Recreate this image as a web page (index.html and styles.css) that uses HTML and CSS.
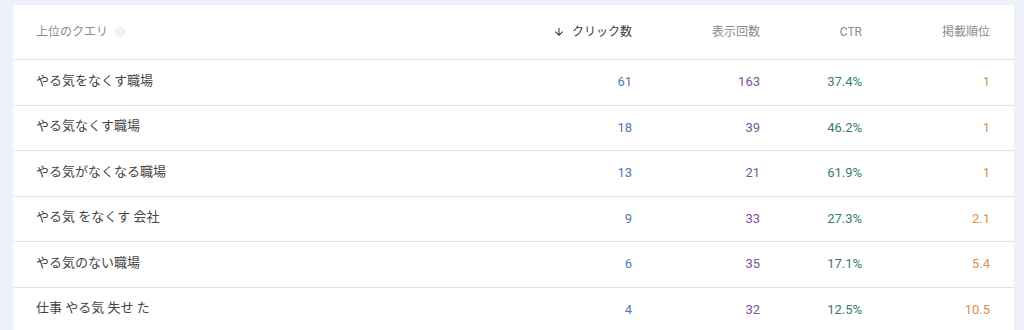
FILE: index.html
```html
<!DOCTYPE html>
<html lang="ja">
<head>
<meta charset="utf-8">
<link rel="stylesheet" href="styles.css">
</head>
<body>
<div class="card">
  <div class="row head">
    <div class="c q">上位のクエリ <svg class="help" width="12" height="12" viewBox="0 0 24 24"><path fill="#f0f0f0" d="M12 2a10 10 0 1 0 0 20 10 10 0 0 0 0-20zm1 17h-2v-2h2v2zm2.07-7.75-.9.92C13.45 12.9 13 13.5 13 15h-2v-.5c0-1.1.45-2.1 1.17-2.83l1.24-1.26A2 2 0 0 0 12 7a2 2 0 0 0-2 2H8a4 4 0 1 1 8 0c0 .88-.36 1.68-.93 2.25z"/></svg></div>
    <div class="c n active"><svg class="arrow" width="12" height="12" viewBox="0 0 24 24"><path fill="#333" d="M20 12l-1.41-1.41L13 16.17V4h-2v12.17l-5.58-5.59L4 12l8 8 8-8z"/></svg>クリック数</div>
    <div class="c n">表示回数</div>
    <div class="c n">CTR</div>
    <div class="c n">掲載順位</div>
  </div>
  <div class="row"><div class="c q">やる気をなくす職場</div><div class="c n clk">61</div><div class="c n imp">163</div><div class="c n ctr">37.4%</div><div class="c n pos">1</div></div>
  <div class="row"><div class="c q">やる気なくす職場</div><div class="c n clk">18</div><div class="c n imp">39</div><div class="c n ctr">46.2%</div><div class="c n pos">1</div></div>
  <div class="row"><div class="c q">やる気がなくなる職場</div><div class="c n clk">13</div><div class="c n imp">21</div><div class="c n ctr">61.9%</div><div class="c n pos">1</div></div>
  <div class="row"><div class="c q">やる気 をなくす 会社</div><div class="c n clk">9</div><div class="c n imp">33</div><div class="c n ctr">27.3%</div><div class="c n pos">2.1</div></div>
  <div class="row"><div class="c q">やる気のない職場</div><div class="c n clk">6</div><div class="c n imp">35</div><div class="c n ctr">17.1%</div><div class="c n pos">5.4</div></div>
  <div class="row"><div class="c q">仕事 やる気 失せ た</div><div class="c n clk">4</div><div class="c n imp">32</div><div class="c n ctr">12.5%</div><div class="c n pos">10.5</div></div>
</div>
</body>
</html>
```
FILE: styles.css
```css
html, body { margin: 0; padding: 0; }
body {
  background: #eef1fa;
  padding: 5px 10px 0 13px;
  font-family: Roboto, "Noto Sans CJK JP", sans-serif;
  overflow: hidden;
  height: 330px;
  box-sizing: border-box;
}
.card {
  background: #fff;
  width: 1001px;
}
.row {
  display: grid;
  grid-template-columns: 468px 128px 128px 102px 128px;
  padding: 0 24px 0 23px;
  height: 45.5px;
  box-sizing: border-box;
  border-bottom: 1px solid #e3e3e3;
  align-items: center;
}
.row.head {
  height: 55px;
  padding-bottom: 1px;
}
.c { font-size: 13px; line-height: 16px; color: #444; white-space: nowrap; }
.q { display: flex; align-items: center; gap: 4px; padding-bottom: 3px; }
.n { text-align: right; }
.head .c { font-size: 12px; color: #8c8c8c; }
.head .q { padding-bottom: 0; }
.head .active { color: #3c3c3c; display: flex; justify-content: flex-end; align-items: center; }
.arrow { margin-right: 7px; }
.help { margin-left: 2px; }
.clk { color: #4f7ab3; }
.imp { color: #80539a; }
.ctr { color: #357e6e; }
.pos { color: #d8914f; }
```
